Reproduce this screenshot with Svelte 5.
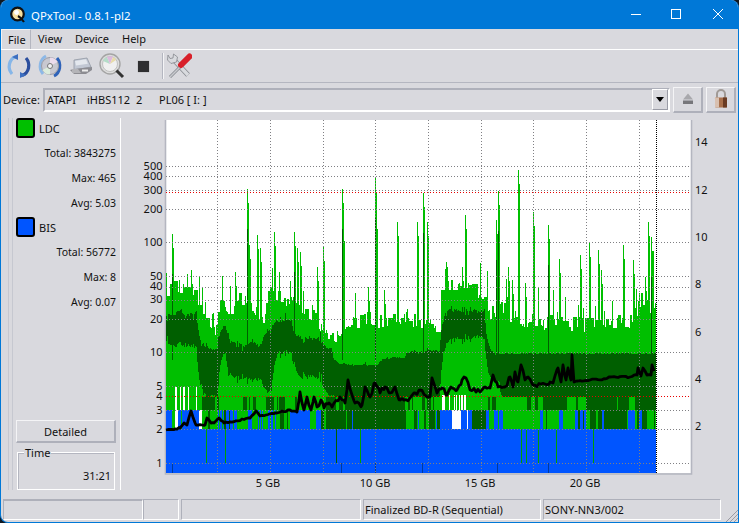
<script>
  // seeded noise so the trace looks the same on every load
  let seed = 4711
  function rnd() {
    seed = (seed + 0x6d2b79f5) | 0
    let t = Math.imul(seed ^ (seed >>> 15), 1 | seed)
    t = (t + Math.imul(t ^ (t >>> 7), 61 | t)) ^ t
    return ((t ^ (t >>> 14)) >>> 0) / 4294967296
  }

  const X0 = 166
  const X1 = 656

  const ENVELOPE = [
    [166, 290], [180, 283], [190, 280], [197, 293], [205, 313], [216, 330], [220, 293], [228, 307],
    [240, 293], [250, 303], [262, 320], [268, 293], [280, 293], [295, 303], [315, 317], [323, 327],
    [330, 337], [340, 327], [355, 320], [370, 317], [385, 320], [405, 317], [425, 323], [438, 323],
    [440, 287], [450, 283], [470, 287], [485, 293], [490, 313], [495, 307], [500, 303], [510, 313],
    [520, 320], [550, 320], [590, 323], [610, 320], [630, 320], [640, 297], [650, 303], [656, 307],
  ]

  const SPIKES = [
    [172, 234, 1], [191, 270], [235, 272], [247, 189, 1], [249, 245], [257, 235], [260, 248], [274, 232],
    [294, 232, 1], [297, 248], [300, 252], [317, 267], [323, 247], [342, 189, 1], [343, 227], [368, 287],
    [375, 178, 1], [376, 215], [384, 290], [397, 222], [417, 222], [423, 193, 1], [427, 222], [447, 267],
    [462, 267], [465, 215], [498, 191, 1], [496, 220, 1], [508, 267], [512, 280], [518, 170], [525, 283],
    [533, 212], [548, 225, 1], [559, 259], [580, 255], [589, 243], [598, 250], [601, 270], [623, 245],
    [633, 260], [639, 293], [645, 277], [648, 222], [651, 237, 1], [652, 237], [655, 303],
  ]

  // xEnd, top, bottom, jitter of the dark band
  const BAND = [
    [197, 306, 338, 15], [218, 345, 392, 8], [226, 318, 345, 10], [262, 338, 372, 12], [272, 325, 388, 8],
    [292, 313, 345, 12], [322, 333, 370, 12], [332, 345, 392, 8], [378, 363, 397, 4], [405, 356, 397, 4],
    [440, 348, 400, 6], [485, 305, 332, 12], [500, 351, 380, 5], [656, 353, 397, 1],
  ]

  // xEnd, blue, white, light, dark chances
  const ROW_LOW = [
    [200, 0.72, 0.06, 0.2, 0.02], [218, 0.1, 0, 0.85, 0.05], [235, 0.65, 0, 0.3, 0.05], [270, 0.25, 0, 0.6, 0.15],
    [292, 0.2, 0.03, 0.65, 0.12], [322, 0.65, 0.05, 0.25, 0.05], [332, 0.1, 0, 0.4, 0.5], [372, 0.1, 0, 0.03, 0.87],
    [405, 0.1, 0, 0.1, 0.8], [440, 0.15, 0, 0.55, 0.3], [470, 0.62, 0.28, 0.08, 0.02], [480, 0.1, 0, 0.1, 0.8],
    [505, 0.4, 0, 0.45, 0.15], [530, 0.05, 0, 0.9, 0.05], [550, 0.35, 0, 0.55, 0.1], [568, 0.05, 0, 0.9, 0.05],
    [585, 0.4, 0, 0.3, 0.3], [620, 0.15, 0, 0.15, 0.7], [656, 0.15, 0, 0.45, 0.4],
  ]
  const ROW_MID = [
    [197, 0, 0, 1, 0], [218, 0, 0, 0.2, 0.8], [262, 0, 0, 0.8, 0.2], [272, 0, 0, 0.3, 0.7], [325, 0, 0, 0.88, 0.12],
    [405, 0, 0, 0.08, 0.92], [440, 0, 0, 0.55, 0.45], [470, 0, 0, 1, 0], [485, 0, 0, 0.9, 0.1], [500, 0, 0, 0.5, 0.5],
    [540, 0, 0, 0.8, 0.2], [567, 0, 0, 0.4, 0.6], [575, 0, 0, 1, 0], [656, 0, 0, 0.25, 0.75],
  ]

  const TRACE = [
    [166, 430], [175, 429], [180, 428], [184, 423], [187, 425], [191, 411], [196, 425], [205, 425], [207, 418],
    [211, 423], [214, 423], [219, 418], [224, 423], [230, 422], [250, 418], [256, 411], [260, 416], [275, 413],
    [280, 412], [290, 410], [297, 412], [300, 392], [304, 410], [307, 397], [311, 410], [314, 397], [317, 407],
    [321, 400], [324, 408], [329, 403], [332, 407], [340, 397], [345, 403], [348, 380], [355, 403], [362, 405],
    [365, 387], [370, 397], [375, 383], [380, 393], [385, 387], [390, 393], [395, 387], [400, 400], [410, 398],
    [415, 393], [420, 390], [427, 397], [430, 397], [432, 378], [437, 393], [442, 388], [447, 395], [452, 388],
    [457, 390], [462, 380], [466, 378], [470, 390], [480, 392], [485, 387], [490, 388], [493, 375], [497, 383],
    [498, 387], [505, 387], [510, 377], [513, 387], [515, 372], [518, 382], [521, 365], [525, 380], [528, 377],
    [533, 385], [545, 384], [550, 382], [553, 383], [558, 368], [561, 382], [563, 365], [566, 380], [568, 368],
    [571, 380], [572, 355], [574, 382], [590, 380], [605, 379], [610, 377], [630, 377], [637, 375], [638, 368],
    [641, 376], [643, 368], [647, 375], [651, 375], [652, 365], [655, 375],
  ]

  function envAt(x) {
    for (let i = 1; i < ENVELOPE.length; i++) {
      const [xa, ya] = ENVELOPE[i - 1]
      const [xb, yb] = ENVELOPE[i]
      if (x <= xb) return ya + ((yb - ya) * (x - xa)) / (xb - xa)
    }
    return 307
  }

  function pick(table, x) {
    const row = table.find((r) => x < r[0]) || table[table.length - 1]
    const names = ['blue', 'white', 'light', 'dark']
    let r = rnd()
    for (let i = 0; i < 4; i++) {
      r -= row[i + 1]
      if (r <= 0) return names[i]
    }
    return 'dark'
  }

  function seg(x, a, b) {
    return `M${x + 0.5} ${Math.round(a)}V${Math.round(b)}`
  }

  function isWhiteGap(x) {
    if (x > 174 && x < 198) return rnd() < 0.16
    if (x > 441 && x < 466) return rnd() < 0.62
    return false
  }

  function buildLayers() {
    const light = []
    const dark = []
    const over = { blue: [], white: [], light: [], dark: [] }
    let mid = 'light'
    let low = 'blue'
    let top = 300
    let bandTop = 320
    let bandBot = 340
    for (let x = X0; x < X1; x++) {
      // hold values over a couple of columns, the real trace is blocky
      if (rnd() < 0.55) top = envAt(x) + rnd() * 16 - 6
      let colTop = top
      if (rnd() < 0.1) colTop -= 10 + rnd() * 22
      const spike = SPIKES.find((s) => s[0] === x || s[0] + 1 === x)
      if (spike) colTop = spike[1] + (spike[0] === x ? 0 : 14)
      light.push(seg(x, colTop, 429))

      // the band edges drift towards each section's level instead of jumping
      const band = BAND.find((b) => x < b[0]) || BAND[BAND.length - 1]
      const pull = band[3] > 2 ? 0.3 : 0.6
      bandTop += (band[1] + rnd() * band[3] - bandTop) * pull
      bandBot += (band[2] + rnd() * band[3] - bandBot) * pull
      const jag = rnd() < 0.25 ? (rnd() - 0.5) * band[3] : 0
      dark.push(seg(x, bandTop + jag, Math.min(bandBot - jag, 400)))
      if (spike && spike[2] && spike[0] === x) dark.push(seg(x, spike[1] + 40, 360))

      // stripes under the band, runs of a few columns
      if (rnd() < 0.4) mid = pick(ROW_MID, x)
      if (rnd() < 0.5) low = pick(ROW_LOW, x)
      over[mid].push(seg(x, 397, 410))
      over[low].push(seg(x, 410, 429))
      if (isWhiteGap(x)) over.white.push(seg(x, x > 400 ? 395 : 387, 410))
    }
    const toD = (list) => list.join('')
    return {
      light: toD(light),
      dark: toD(dark),
      overLight: toD(over.light),
      overDark: toD(over.dark),
      overWhite: toD(over.white),
      overBlue: toD(over.blue),
    }
  }

  // thicken the measured points with small wobble where the trace is noisy
  function buildTrace() {
    const out = []
    for (let i = 0; i < TRACE.length - 1; i++) {
      const [xa, ya] = TRACE[i]
      const [xb, yb] = TRACE[i + 1]
      out.push(`${xa},${ya}`)
      for (let x = xa + 2; x < xb; x += 2) {
        const noisy = (x > 297 && x < 500) || (x > 505 && x < 575)
        const y = ya + ((yb - ya) * (x - xa)) / (xb - xa) + (rnd() - 0.5) * (noisy ? 5 : 1.4)
        out.push(`${x},${y.toFixed(1)}`)
      }
    }
    return out.join(' ')
  }

  const layers = buildLayers()
  const tracePoints = buildTrace()

  const leftLabels = [
    ['500', 166], ['400', 176], ['300', 190], ['200', 209], ['100', 242], ['50', 276], ['40', 286], ['30', 299],
    ['20', 319], ['10', 352], ['5', 386], ['4', 396], ['3', 410], ['2', 429], ['1', 463],
  ]
  const rightLabels = [['14', 142], ['12', 190], ['10', 237], ['8', 284], ['6', 332], ['4', 379], ['2', 426]]
  const gbLabels = [['5 GB', 268], ['10 GB', 375], ['15 GB', 480], ['20 GB', 585]]
  const gridY = [166, 176, 190, 209, 242, 276, 287, 300, 319, 352, 386, 410, 429, 463]
  const gridX = [217, 270, 323, 375, 428, 481, 533, 586, 639]
  const menus = ['File', 'View', 'Device', 'Help']
  const ldc = [['Total:', '3843275'], ['Max:', '465'], ['Avg:', '5.03']]
  const bis = [['Total:', '56772'], ['Max:', '8'], ['Avg:', '0.07']]
</script>

<div class="window">
  <header class="titlebar">
    <svg class="appicon" width="16" height="18" viewBox="0 0 16 18">
      <circle cx="7.500" cy="8" r="6.300" fill="#f6dfa0" stroke="#111" stroke-width="2.200" />
      <circle cx="6.500" cy="6.500" r="2.400" fill="#fff" />
      <path d="M8 10c2 1 4 3 6 6" stroke="#111" stroke-width="2.200" fill="none" />
    </svg>
    <span class="title">QPxTool - 0.8.1-pl2</span>
    <svg class="winbtns" width="93" height="11" viewBox="0 0 93 11" fill="none" stroke="#fff">
      <path d="M0 5.500h10" />
      <rect x="40.500" y="0.500" width="9" height="9" />
      <path d="M82 0l10 10M92 0L82 10" />
    </svg>
  </header>

  <nav class="menubar">
    {#each menus as m, i}
      <span class="menu" class:hot={i === 0}>{m}</span>
    {/each}
  </nav>

  <div class="toolbar">
    <svg class="tool" width="26" height="26" viewBox="0 0 26 26" fill="none">
      <path d="M10 3.500C3 6 1 15 6 21" stroke="#86b6e8" stroke-width="3.200" />
      <path d="M16 22.500C23 20 25 11 20 5" stroke="#2c4f9e" stroke-width="3.200" />
      <path d="M6 4l6-3 0 6zM20 22l-6 3 0-6z" fill="#3d6fc0" />
    </svg>
    <svg class="tool" width="26" height="26" viewBox="0 0 26 26" fill="none">
      <path d="M9 3C3 6 1 15 6 21" stroke="#8db8e6" stroke-width="3" />
      <path d="M17 23C23 20 25 11 20 5" stroke="#2f62b8" stroke-width="3" />
      <circle cx="13" cy="13" r="8.500" fill="#c8c8d0" stroke="#9a9aa4" />
      <path d="M13 4.500a8.500 8.500 0 0 1 7.500 4.500L13 13z" fill="#ecdcec" />
      <path d="M13 21.500a8.500 8.500 0 0 1-7.500-4.500L13 13z" fill="#dcecdc" />
      <circle cx="13" cy="13" r="2.500" fill="#f2f2f4" stroke="#777" />
    </svg>
    <svg class="tool" width="26" height="26" viewBox="0 0 26 26">
      <path d="M6 7l13-2 4 9-17 3z" fill="#c2c8d4" stroke="#8a909c" stroke-width="0.700" />
      <path d="M7 8l11-1.800 1.800 4.500L8 12.500z" fill="#e4e8ee" />
      <path d="M2 17l4-1 18-2v3l-6 4H6z" fill="#8c8c92" />
      <path d="M4 20h9l-3-4H4z" fill="#b4b4b8" />
      <rect x="14" y="16.500" width="6" height="2" fill="#ececec" />
    </svg>
    <svg class="tool" width="26" height="26" viewBox="0 0 26 26" fill="none">
      <circle cx="11" cy="11" r="10" fill="#dcdcdc" stroke="#a4a4a4" stroke-width="1.400" />
      <circle cx="11" cy="11" r="7.500" fill="#f0f0f0" stroke="#c0c0c0" />
      <path d="M11 11L4 8a7.500 7.500 0 0 1 4-4z" fill="#b4dcc8" />
      <path d="M11 11L8 4a7.500 7.500 0 0 1 6-.2z" fill="#dcb8dc" />
      <path d="M11 11l3-7a7.500 7.500 0 0 1 3 3z" fill="#e8dca8" />
      <path d="M17.500 17.500l6.500 6.500" stroke="#333" stroke-width="3" />
    </svg>
    <span class="stop"></span>
    <span class="toolsep"></span>
    <svg class="tool tools" width="26" height="28" viewBox="0 0 26 28" fill="none">
      <path d="M7 7l15 16" stroke="#85888e" stroke-width="5" />
      <path d="M7 7l15 16" stroke="#d8dade" stroke-width="3.400" />
      <path d="M2 3l-.5 5 3.500 3.500 5.500-1.500 1-5-4-3-.5 4-3 .5z" fill="#d8dade" stroke="#85888e" stroke-width="0.800" />
      <path d="M14.500 14.500L4 25" stroke="#85888e" stroke-width="3" />
      <path d="M14.500 14.500L4 25" stroke="#c8cace" stroke-width="1.600" />
      <path d="M23.500 4.500L15 13" stroke="#d8202a" stroke-width="6" stroke-linecap="round" />
    </svg>
  </div>

  <div class="devicebar">
    <span class="devlabel">Device:</span>
    <div class="combo">
      <span class="devtext"><span>ATAPI</span><span>iHBS112</span><span>2</span><span>PL06 [ I: ]</span></span>
      <span class="drop"><i></i></span>
    </div>
    <button class="iconbtn" aria-label="Eject">
      <svg width="14" height="14" viewBox="0 0 14 14">
        <path d="M7 1.500l5 6H2z" fill="#a8a8ac" />
        <rect x="2" y="8.500" width="10" height="3.500" fill="#77777b" />
      </svg>
    </button>
    <button class="iconbtn" aria-label="Lock">
      <svg width="16" height="20" viewBox="0 0 16 20" fill="none">
        <path d="M4 9V5a4 4 0 0 1 8 0v4" stroke="#a09a96" stroke-width="2" />
        <rect x="2" y="8.500" width="12" height="10" rx="1" fill="#a8704c" />
        <rect x="2" y="8.500" width="4" height="10" fill="#d8c0b0" />
        <rect x="10" y="8.500" width="4" height="10" fill="#6a3c24" />
      </svg>
    </button>
  </div>

  <div class="main">
    <aside class="side">
      <div class="inner">
        <div class="legend">
          <div class="key"><span class="swatch green"></span>LDC</div>
          {#each ldc as [k, v]}
            <div class="stat">{k} {v}</div>
          {/each}
        </div>
        <div class="legend">
          <div class="key"><span class="swatch blue"></span>BIS</div>
          {#each bis as [k, v]}
            <div class="stat">{k} {v}</div>
          {/each}
        </div>
        <button class="detailed">Detailed</button>
        <div class="time">
          <span class="timelabel">Time</span>
          <div class="clock">31:21</div>
        </div>
      </div>
    </aside>

    <svg class="chart" width="617" height="384" viewBox="122 115 617 384">
      <rect x="166" y="120" width="525" height="353" fill="#fff" />
      <path d="M165.500 120V474H691.500V120" fill="none" stroke="#b4b6c0" stroke-width="1.600" />
      <g fill="none" stroke-width="1" shape-rendering="crispEdges">
        <path d={layers.light} stroke="#00bf00" />
        <path d={layers.dark} stroke="#005f00" />
        <path d={layers.overLight} stroke="#00bf00" />
        <path d={layers.overDark} stroke="#005f00" />
        <path d={layers.overBlue} stroke="#0055ff" />
        <path d={layers.overWhite} stroke="#fff" />
        <rect x="166" y="429" width="490" height="44" fill="#0055ff" stroke="none" />
        {#each [206, 225, 336, 360, 521, 526, 538, 556, 593] as x}
          <path d="M{x + 0.5} 429V463" stroke={x === 336 ? '#005f00' : '#00a000'} />
        {/each}
        {#each [172, 341, 375, 422, 497, 548] as x}
          <path d="M{x + 0.5} 463V473" stroke="#003a9e" />
        {/each}
        {#each gridY as y}
          <path d="M166 {y + 0.5}H691" stroke="#808084" stroke-dasharray="1 2" />
        {/each}
        {#each gridX as x}
          <path d="M{x + 0.5} 120V473" stroke="#808084" stroke-dasharray="1 2" />
        {/each}
        <path d="M166 396.500H691" stroke="#e80000" stroke-dasharray="1 2" />
        <path d="M166 192.500H691" stroke="#e80000" stroke-dasharray="1 2" />
        <path d="M656.500 120V473" stroke="#000" stroke-dasharray="1 1" />
      </g>
      <polyline points={tracePoints} fill="none" stroke="#000" stroke-width="2.800" stroke-linejoin="round" />
      <g class="labels">
        {#each leftLabels as [t, y]}
          <text x="162.500" y={y + 4} text-anchor="end">{t}</text>
        {/each}
        {#each rightLabels as [t, y]}
          <text x="695" y={y + 4}>{t}</text>
        {/each}
        {#each gbLabels as [t, x]}
          <text {x} y="487" text-anchor="middle">{t}</text>
        {/each}
      </g>
    </svg>
  </div>

  <footer class="statusbar">
    <span class="cell first"></span>
    <span class="cell second"></span>
    <span class="cell third"></span>
    <span class="cell fourth">Finalized BD-R (Sequential)</span>
    <span class="cell fifth">SONY-NN3/002</span>
    <svg class="grip" width="14" height="12" viewBox="0 0 14 12" stroke="#9a9aa2">
      <path d="M2 12L14 0M6 12l8-8M10 12l4-4" />
    </svg>
  </footer>
</div>

<style>
  :global(body) {
    margin: 0;
    background: #101820;
  }

  .window {
    width: 739px;
    height: 523px;
    box-sizing: border-box;
    display: flex;
    flex-direction: column;
    border: 1px solid #0078d7;
    border-top: 0;
    border-radius: 8px 8px 0 8px;
    background: #d9d9de;
    overflow: hidden;
    font: 11px "Noto Sans", sans-serif;
    color: #111;
  }

  .titlebar {
    height: 29px;
    flex: none;
    display: flex;
    align-items: center;
    background: #0078d7;
    color: #fff;
    padding-left: 9px;
  }

  .appicon {
    margin-right: 5px;
  }

  .title {
    font-size: 11.4px;
    margin-top: 1px;
  }

  .winbtns {
    display: block;
    margin-left: auto;
    margin-right: 14px;
  }

  .menubar {
    height: 20px;
    flex: none;
    display: flex;
    align-items: center;
    border-bottom: 1px solid #fff;
  }

  .menu {
    padding: 0 6px;
    line-height: 20px;
    margin-right: 1px;
  }

  .menu.hot {
    width: 17px;
    padding: 0 5px 0 6px;
    border-top: 1px solid #f2f2f4;
    border-left: 1px solid #f2f2f4;
    border-right: 1px solid #b4b6c0;
    line-height: 19px;
  }

  .toolbar {
    height: 32px;
    flex: none;
    display: flex;
    align-items: center;
    padding-left: 5px;
    gap: 5px;
    border-bottom: 1px solid #b4b6c0;
  }

  .tool {
    display: block;
  }

  .tools {
    margin-left: -3px;
  }

  .stop {
    width: 11px;
    height: 11px;
    margin: 0 9px 0 8px;
    background: #2e2e30;
    box-shadow: 0 0 1px #888;
  }

  .toolsep {
    width: 1px;
    height: 26px;
    background: #f4f4f6;
    box-shadow: -1px 0 #b4b6c0;
  }

  .devicebar {
    height: 31px;
    flex: none;
    display: flex;
    align-items: center;
    padding-left: 2px;
    border-top: 1px solid #d9d9de;
  }

  .devlabel {
    width: 40px;
  }

  .combo {
    width: 621px;
    height: 20px;
    display: flex;
    align-items: center;
    justify-content: space-between;
    border: 2px solid;
    border-color: #aeb0ba #fff #fff #aeb0ba;
    padding-left: 2px;
  }

  .devtext {
    display: grid;
    grid-template-columns: 40px 49px 23px auto;
  }

  .drop {
    width: 14px;
    height: 19px;
    display: flex;
    align-items: center;
    justify-content: center;
    border: 1px solid;
    border-color: #fff #9a9ca6 #9a9ca6 #fff;
  }

  .drop i {
    border: 4px solid transparent;
    border-top: 5px solid #000;
    border-bottom: 0;
  }

  .iconbtn {
    width: 30px;
    height: 26px;
    margin-left: 3px;
    padding: 0;
    display: flex;
    align-items: center;
    justify-content: center;
    background: #d9d9de;
    border: 1px solid;
    border-width: 1px 2px 2px 1px;
    border-color: #f4f4f6 #aeb0ba #aeb0ba #f4f4f6;
  }

  .main {
    flex: 1;
    min-height: 0;
    display: flex;
  }

  .side {
    width: 111px;
    flex: none;
    margin: 3px 0 9px 7px;
    border-left: 1px solid #c6c8d0;
    border-right: 1px solid #fff;
  }

  .inner {
    height: 100%;
    box-sizing: border-box;
    display: flex;
    flex-direction: column;
    padding-right: 4px;
    margin-left: 3px;
    border-left: 1px solid #c6c8d0;
  }

  .legend {
    height: 99px;
    flex: none;
  }

  .key {
    height: 20px;
    display: flex;
    align-items: center;
    gap: 4px;
    margin-left: 3px;
  }

  .swatch {
    width: 15px;
    height: 16px;
    border: 2px solid #000;
    border-radius: 3px;
  }

  .green {
    background: #00bf00;
  }

  .blue {
    background: #0055ff;
  }

  .stat {
    height: 25px;
    line-height: 25px;
    text-align: right;
    font-size: 10.5px;
    position: relative;
    top: 3px;
  }

  .detailed {
    margin: auto 0 0 3px;
    width: 100px;
    height: 23px;
    flex: none;
    padding: 0;
    font: inherit;
    color: inherit;
    background: #d9d9de;
    border: 1px solid;
    border-width: 1px 2px 2px 1px;
    border-color: #f4f4f6 #aeb0ba #aeb0ba #f4f4f6;
  }

  .time {
    margin: 9px 0 0 4px;
    width: 98px;
    height: 38px;
    flex: none;
    box-sizing: border-box;
    padding: 16px 3px 0 0;
    border: 1px solid #fff;
    box-shadow: inset 1px 1px #b4b6c0;
    position: relative;
  }

  .timelabel {
    position: absolute;
    left: 6px;
    top: -7px;
    padding: 0 1px;
    background: #d9d9de;
    line-height: 14px;
  }

  .clock {
    text-align: right;
    line-height: 14px;
  }

  .chart {
    display: block;
    flex: none;
    margin-left: 1px;
  }

  .labels text {
    font: 11px "Noto Sans", sans-serif;
    fill: #111;
  }

  .statusbar {
    height: 23px;
    flex: none;
    display: flex;
    gap: 2px;
    position: relative;
    padding: 0 0 2px 2px;
    box-sizing: border-box;
  }

  .cell {
    display: flex;
    align-items: center;
    box-sizing: border-box;
    padding-left: 1px;
    border: 1px solid;
    border-color: #aeb0ba #fff #fff #aeb0ba;
  }

  .first {
    width: 140px;
    border-top-width: 2px;
    margin-right: -2px;
  }

  .second {
    width: 36px;
  }

  .third {
    width: 180px;
  }

  .fourth,
  .fifth {
    width: 178px;
  }

  .grip {
    position: absolute;
    right: 0;
    bottom: 0;
  }
</style>
